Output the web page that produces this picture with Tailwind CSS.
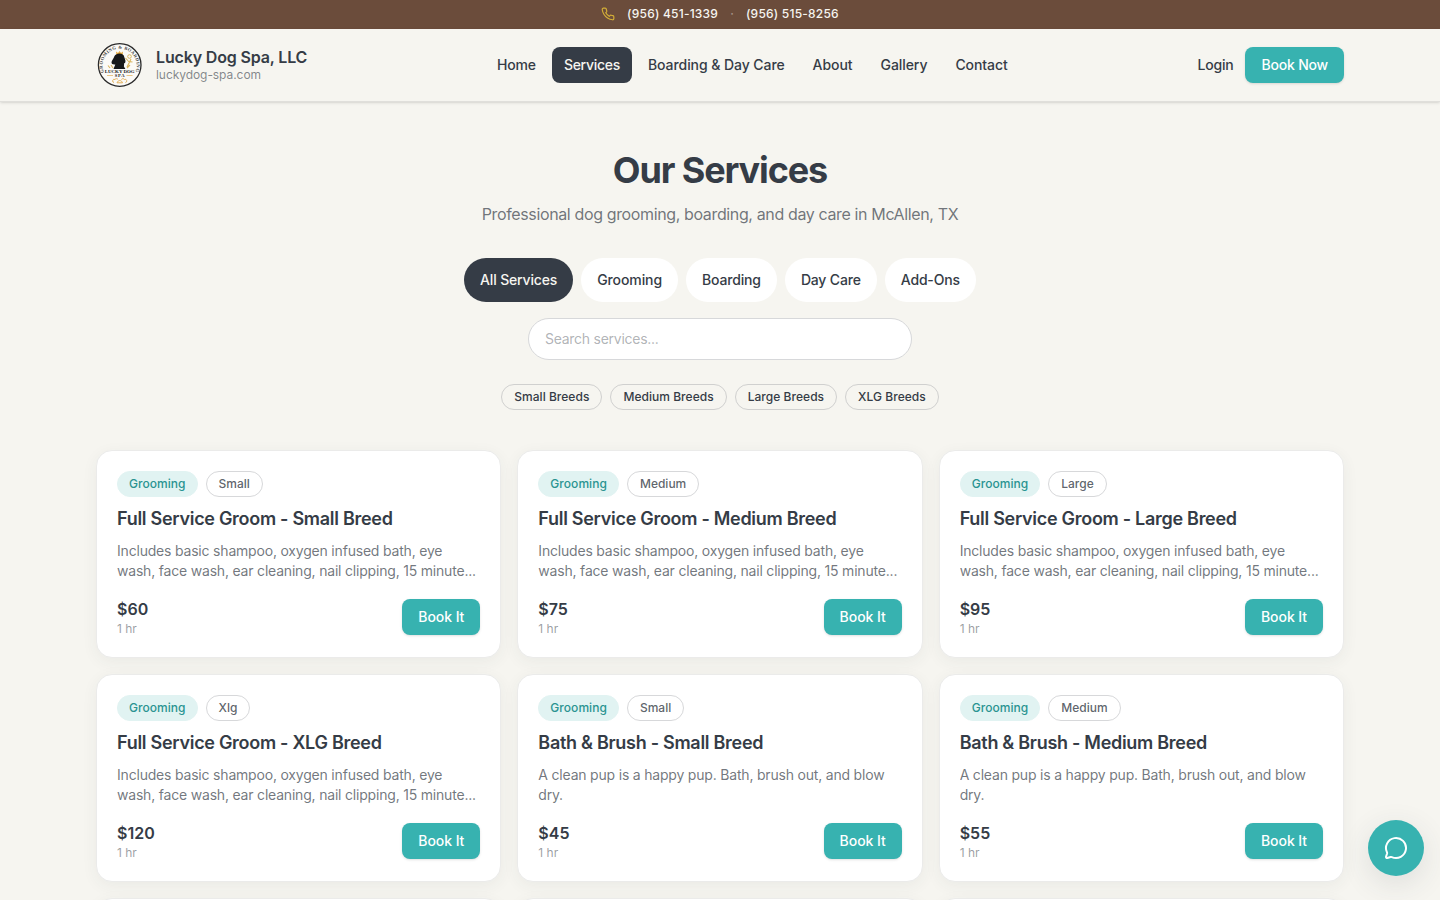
<!DOCTYPE html>
<html lang="en">
<head>
  <meta charset="UTF-8" />
  <meta name="viewport" content="width=device-width, initial-scale=1" />
  <title>Services | Lucky Dog Spa, LLC</title>
  <script src="https://cdn.jsdelivr.net/npm/@tailwindcss/browser@4"></script>
</head>
<body class="h-screen overflow-hidden bg-[#f6f5f0] font-['Inter',sans-serif] text-[#353c46] antialiased">

  <!-- Phone bar -->
  <div class="flex h-[29px] items-center justify-center gap-3 bg-[#6b4c3b] pb-px text-xs font-medium tracking-[0.018em] text-[#f6f5f0]">
    <svg class="size-3.5 text-[#d4af37]" viewBox="0 0 24 24" fill="none" stroke="currentColor" stroke-width="2" stroke-linecap="round" stroke-linejoin="round">
      <path d="M22 16.92v3a2 2 0 0 1-2.18 2 19.79 19.79 0 0 1-8.63-3.07 19.5 19.5 0 0 1-6-6 19.79 19.79 0 0 1-3.07-8.67A2 2 0 0 1 4.11 2h3a2 2 0 0 1 2 1.72 12.84 12.84 0 0 0 .7 2.81 2 2 0 0 1-.45 2.11L8.09 9.91a16 16 0 0 0 6 6l1.27-1.27a2 2 0 0 1 2.11-.45 12.84 12.84 0 0 0 2.81.7A2 2 0 0 1 22 16.92z" />
    </svg>
    <a href="tel:9564511339">(956) 451-1339</a>
    <span class="text-white/40">·</span>
    <a href="tel:9565158256">(956) 515-8256</a>
  </div>

  <!-- Header -->
  <header class="border-b border-[#e0dfdb] shadow-sm">
    <div class="mx-auto flex h-[72px] max-w-[1248px] items-center justify-between">
      <a href="#" class="flex items-center gap-3">
        <svg class="size-12" viewBox="0 0 48 48">
          <defs>
            <path id="ring" d="M8.5 32.300 A17 17 0 1 1 38.900 32.300" />
          </defs>
          <circle cx="23.7" cy="24" r="21.3" fill="#fbfaf7" stroke="#2b2b2b" stroke-width="1.3" />
          <text font-family="Liberation Serif, serif" font-size="4.6" font-weight="700" fill="#444"><textPath href="#ring" startOffset="1" textLength="66">GROOMING &amp; BOARDING</textPath></text>
          <path d="M20 10.500l2 1.500 1.500-2 1.500 2 2-1.500-.5 3.500h-6z" fill="#e5a83a" />
          <path d="M18.500 15c1.500-3 7.500-3.600 9.300-.4l1.600 5c.2 2-.4 2.800-1.200 2.500l-.3 3.500 1.500 2.400H17.500l1.800-4.500c-2.500.4-3.800-.6-3.800-2.200 0-1.500 2.300-4 3-6.300z" fill="#17191a" />
          <path d="M31 26l4-8M32.500 20.500l4 .5M29.500 17l4.500 5M14 27l-2-2.500M17 27l-2-3M31 27l3-3" stroke="#d9b45c" stroke-width="1.1" fill="none" />
          <circle cx="33.500" cy="15.500" r="1.800" fill="none" stroke="#d9b45c" />
          <text x="23.700" y="31.800" text-anchor="middle" textLength="30" lengthAdjust="spacingAndGlyphs" font-family="Liberation Serif, serif" font-size="5" font-weight="700" fill="#222">LUCKY DOG</text>
          <text x="23.700" y="36.300" text-anchor="middle" textLength="10" font-family="Liberation Serif, serif" font-size="4.600" font-weight="700" fill="#222">SPA</text>
          <path d="M11 34.500h6M30.500 34.500h6" stroke="#e5b96b" stroke-width=".8" />
          <path d="M18 41.500a1.600 1.600 0 1 1 1-3 1.800 1.800 0 0 1 3 0M29.400 41.500a1.600 1.600 0 1 0-1-3 1.800 1.800 0 0 0-3 0M21 41.800c1-3 4.500-3 5.500 0z" fill="none" stroke="#e0a84c" stroke-width=".9" />
        </svg>
        <div class="pb-0.5">
          <div class="text-base leading-5 font-semibold tracking-[-0.010em]">Lucky Dog Spa, LLC</div>
          <div class="text-xs leading-[15px] tracking-[-0.005em] text-[#353c46]/60">luckydog-spa.com</div>
        </div>
      </a>

      <nav class="flex gap-1 text-sm font-medium tracking-[-0.005em]">
        <a href="#" class="rounded-lg px-3 py-2 tracking-[-0.012em]">Home</a>
        <a href="#" class="rounded-lg bg-[#353c46] px-3 py-2 tracking-[-0.020em] text-[#f6f5f0]">Services</a>
        <a href="#" class="rounded-lg px-3 py-2">Boarding &amp; Day Care</a>
        <a href="#" class="rounded-lg px-3 py-2">About</a>
        <a href="#" class="rounded-lg px-3 py-2">Gallery</a>
        <a href="#" class="rounded-lg px-3 py-2">Contact</a>
      </nav>

      <div class="flex items-center gap-3 text-sm font-medium tracking-[-0.014em]">
        <a href="#">Login</a>
        <a href="#" class="rounded-lg bg-[#37b2b0] px-4 py-2 text-white shadow-sm">Book Now</a>
      </div>
    </div>
  </header>

  <main class="mx-auto max-w-[1248px] pt-12">
    <div class="text-center">
      <h1 class="text-4xl font-bold tracking-[-0.031em]">Our Services</h1>
      <p class="mt-3 text-base tracking-[-0.023em] text-[#353c46]/70">Professional dog grooming, boarding, and day care in McAllen, TX</p>
    </div>

    <!-- Category filter -->
    <div class="mt-8 flex justify-center gap-2 text-sm font-medium tracking-[-0.012em]">
      <button class="h-11 rounded-full bg-[#353c46] px-4 text-[#f6f5f0]">All Services</button>
      <button class="h-11 rounded-full bg-white px-4 tracking-[-0.006em]">Grooming</button>
      <button class="h-11 rounded-full bg-white px-4">Boarding</button>
      <button class="h-11 rounded-full bg-white px-4">Day Care</button>
      <button class="h-11 rounded-full bg-white px-4">Add-Ons</button>
    </div>

    <input type="text" placeholder="Search services..." class="mx-auto mt-4 block h-[42px] w-96 rounded-full border border-[#d7d8da] bg-white px-4 pb-0.5 text-sm tracking-[-0.019em] placeholder:text-[#353c46]/40" />

    <!-- Breed size filter -->
    <div class="mt-6 flex justify-center gap-2 text-xs font-medium tracking-[0.003em]">
      <button class="rounded-full border border-[#d0d0cf] px-3 py-1">Small Breeds</button>
      <button class="rounded-full border border-[#d0d0cf] px-3 py-1">Medium Breeds</button>
      <button class="rounded-full border border-[#d0d0cf] px-3 py-1">Large Breeds</button>
      <button class="rounded-full border border-[#d0d0cf] px-3 py-1">XLG Breeds</button>
    </div>

    <div id="services" class="mt-10 grid grid-cols-3 gap-4"></div>
  </main>

  <!-- Chat button -->
  <button aria-label="Chat" class="fixed right-4 bottom-6 flex size-14 items-center justify-center rounded-full bg-[#37b2b0] text-white shadow-[0_8px_30px_rgba(53,60,70,0.12)]">
    <svg class="size-6" viewBox="0 0 24 24" fill="none" stroke="currentColor" stroke-width="2" stroke-linecap="round" stroke-linejoin="round">
      <path d="M2.992 16.342a2 2 0 0 1 .094 1.167l-1.065 3.29a1 1 0 0 0 1.236 1.168l3.413-.998a2 2 0 0 1 1.099.092 10 10 0 1 0-4.777-4.719" />
    </svg>
  </button>

<script>
  const groom = 'Includes basic shampoo, oxygen infused bath, eye wash, face wash, ear cleaning, nail clipping, 15 minute...';
  const bath = 'A clean pup is a happy pup. Bath, brush out, and blow dry.';

  const services = [
    { size: 'Small', title: 'Full Service Groom - Small Breed', text: groom, price: 60 },
    { size: 'Medium', title: 'Full Service Groom - Medium Breed', text: groom, price: 75 },
    { size: 'Large', title: 'Full Service Groom - Large Breed', text: groom, price: 95 },
    { size: 'Xlg', title: 'Full Service Groom - XLG Breed', text: groom, price: 120 },
    { size: 'Small', title: 'Bath & Brush - Small Breed', text: bath, price: 45 },
    { size: 'Medium', title: 'Bath & Brush - Medium Breed', text: bath, price: 55 }
  ];

  const cards = services.map(s => `
    <article class="rounded-2xl border border-[#ebebea] bg-white p-5 shadow-[0_4px_16px_rgba(53,60,70,0.06)]">
      <div class="flex gap-2 text-xs font-medium">
        <span class="rounded-full border border-[#e1f3f2] bg-[#e1f3f2] px-[11px] py-1 tracking-[0.004em] text-[#2a9391]">Grooming</span>
        <span class="rounded-full border border-[#d7d8da] px-3 py-1 text-[#353c46]/80">${s.size}</span>
      </div>
      <h3 class="mt-2 text-lg leading-7 font-semibold tracking-[-0.016em]">${s.title.replace('&', '&amp;')}</h3>
      <p class="mt-2 line-clamp-2 h-10 text-sm tracking-[-0.014em] text-[#353c46]/70">${s.text}</p>
      <div class="mt-4 flex items-center justify-between">
        <div>
          <div class="text-base font-semibold">$${s.price}</div>
          <div class="text-xs text-[#353c46]/50">1 hr</div>
        </div>
        <button class="rounded-lg bg-[#37b2b0] px-4 py-2 text-sm font-medium tracking-[-0.004em] text-white shadow-sm">Book It</button>
      </div>
    </article>`);

  // next row, still loading
  for (let i = 0; i < 3; i++) {
    cards.push('<article class="h-52 rounded-2xl border border-[#ebebea] bg-white shadow-[0_4px_16px_rgba(53,60,70,0.06)]"></article>');
  }

  document.getElementById('services').innerHTML = cards.join('');
</script>
</body>
</html>
